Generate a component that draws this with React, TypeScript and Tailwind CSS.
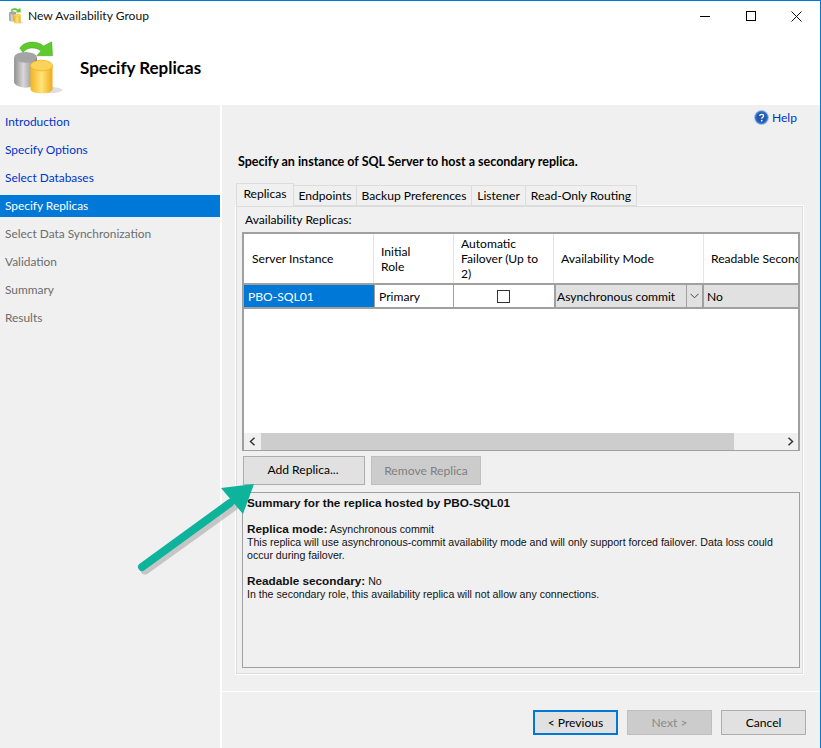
const steps = [
  { label: "Introduction", state: "link" },
  { label: "Specify Options", state: "link" },
  { label: "Select Databases", state: "link" },
  { label: "Specify Replicas", state: "active" },
  { label: "Select Data Synchronization", state: "off" },
  { label: "Validation", state: "off" },
  { label: "Summary", state: "off" },
  { label: "Results", state: "off" },
];

const tabs = [
  { label: "Endpoints", w: "w-[63px]" },
  { label: "Backup Preferences", w: "w-[115px]" },
  { label: "Listener", w: "w-[54px]" },
  { label: "Read-Only Routing", w: "w-[111px]" },
];

function DbIcon({ size }: { size: number }) {
  return (
    <svg width={size} height={size} viewBox="0 0 64 66">
      <defs>
        <linearGradient id="grayDb" x1="0" x2="1" y1="0" y2="0">
          <stop offset="0" stopColor="#8f8f8f" />
          <stop offset="0.4" stopColor="#d8d8d8" />
          <stop offset="1" stopColor="#7c7c7c" />
        </linearGradient>
        <linearGradient id="goldDb" x1="0" x2="1" y1="0" y2="0">
          <stop offset="0" stopColor="#f3b41f" />
          <stop offset="0.5" stopColor="#ffe57a" />
          <stop offset="1" stopColor="#f0a91a" />
        </linearGradient>
      </defs>
      <ellipse cx="44" cy="60" rx="19" ry="4" fill="#dedede" />
      <path d="M4 20v30c0 4 8 7 14 7s14-3 14-7V20z" fill="url(#grayDb)" />
      <ellipse cx="18" cy="20" rx="14" ry="6.500" fill="#a4a4a4" />
      <path d="M24 30v28c0 4 6 6 13.500 6s13.500-2 13.500-6V30z" fill="url(#goldDb)" />
      <ellipse cx="37.500" cy="30" rx="13.500" ry="6.500" fill="#fbd25a" stroke="#f3b41f" />
      <path d="M11 9C15 1 30-2 40 6L50 1l1 17H32l5-6C30 7 20 7 15 14z" fill="#5fc92e" stroke="#3fa51b" strokeWidth="0.6" />
    </svg>
  );
}

function HelpIcon() {
  return (
    <svg width="15" height="15" viewBox="0 0 16 16">
      <circle cx="8" cy="8" r="7.4" fill="#2f6fc4" stroke="#a9c3e6" />
      <circle cx="8" cy="8" r="5.4" fill="#2459ad" />
      <path d="M6 6.2c.2-2 4.2-2 4.2.1 0 1.500-2 1.500-2 3" fill="none" stroke="#fff" strokeWidth="1.4" />
      <rect x="7.400" y="10.600" width="1.600" height="1.600" fill="#fff" />
    </svg>
  );
}

export default function App() {
  return (
    <div className="relative w-[821px] h-[748px] overflow-hidden flex flex-col bg-[#f0f0f0] border-t border-r border-[#0078d7] text-[12.1px] text-[#000] font-['Lato','Noto_Sans',sans-serif]">
      {/* Title bar */}
      <div className="h-[30px] bg-white flex items-center pl-[8px] shrink-0">
        <DbIcon size={16} />
        <span className="ml-[4px] pt-px text-[#111]">New Availability Group</span>
        <div className="ml-auto flex items-center">
          <div className="w-[46px] flex justify-center">
            <div className="w-[10px] h-px bg-black" />
          </div>
          <div className="w-[46px] flex justify-center">
            <div className="w-[10px] h-[10px] border border-black" />
          </div>
          <div className="w-[46px] flex justify-center pr-[2px]">
            <svg width="11" height="11" viewBox="0 0 11 11">
              <path d="M0.500 0.500l10 10M10.500 0.500l-10 10" stroke="#111" strokeWidth="1" />
            </svg>
          </div>
        </div>
      </div>

      {/* Page header */}
      <div className="h-[74px] bg-white flex items-center shrink-0 pl-[10px]">
        <DbIcon size={54} />
        <h1 className="ml-[16px] text-[17px] font-bold">Specify Replicas</h1>
      </div>

      <div className="flex-1 flex min-h-0">
        {/* Steps */}
        <nav className="w-[222px] shrink-0 border-r-2 border-white pt-[6px] flex flex-col gap-[6px] text-[11.9px]">
          {steps.map((s) => (
            <div
              key={s.label}
              className={
                s.state === "active"
                  ? "h-[22px] pl-[5px] flex items-center bg-[#0078d7] text-white"
                  : s.state === "link"
                    ? "h-[22px] pl-[5px] flex items-center text-[#0033cc]"
                    : "h-[22px] pl-[5px] flex items-center text-[#6d6d6d]"
              }
            >
              {s.label}
            </div>
          ))}
        </nav>

        <div className="flex-1 min-w-0 flex flex-col">
          <div className="flex-1 pl-[13px] pr-[16px]">
            <div className="h-[25px] flex items-center justify-end gap-[3px] pr-[7px] text-[#0033cc]">
              <HelpIcon />
              <span className="pt-[2px]">Help</span>
            </div>

            <p className="mt-[22px] ml-[3px] h-[20px] text-[12.5px] font-bold leading-[20px]">
              Specify an instance of SQL Server to host a secondary replica.
            </p>

            {/* Tabs */}
            <div className="mt-[11px] h-[23px] flex items-end pl-px">
              <div className="relative z-10 w-[58px] h-[23px] pb-px bg-[#f0f0f0] border border-b-0 border-[#dcdcdc] flex items-center justify-center">
                Replicas
              </div>
              {tabs.map((t) => (
                <div
                  key={t.label}
                  className={`${t.w} h-[21px] pt-[2px] border border-l-0 border-[#dcdcdc] flex items-center justify-center`}
                >
                  {t.label}
                </div>
              ))}
            </div>

            {/* Tab page */}
            <div className="-mt-px w-[569px] h-[470px] border-2 border-white outline outline-[#dcdcdc] -outline-offset-2 pl-[5px] pr-[4px] pt-[6px]">
              <div className="h-[18px] pl-[3px] leading-[14px]">Availability Replicas:</div>

              <div className="mt-[1px] h-[219px] w-[558px] border-t-2 border-l-2 border-r-2 border-b border-[#a0a0a0] bg-white flex flex-col overflow-hidden">
                <div className="h-[51px] flex shrink-0 border-b-2 border-[#a0a0a0]">
                  <div className="w-[130px] shrink-0 border-r border-[#e4e4e4] pl-[8px] pt-[2px] flex items-center">Server Instance</div>
                  <div className="w-[80px] shrink-0 border-r border-[#e4e4e4] pl-[7px] flex items-center leading-[15px]">
                    <span>
                      Initial
                      <br />
                      Role
                    </span>
                  </div>
                  <div className="w-[100px] shrink-0 border-r border-[#e4e4e4] pl-[7px] flex items-center leading-[15px]">
                    <span>
                      Automatic
                      <br />
                      Failover (Up to
                      <br />
                      2)
                    </span>
                  </div>
                  <div className="w-[150px] shrink-0 border-r border-[#e4e4e4] pl-[7px] pt-[2px] flex items-center text-[12.3px]">Availability Mode</div>
                  <div className="flex-1 min-w-0 pl-[7px] pt-[2px] flex items-center whitespace-nowrap overflow-hidden">Readable Secondary</div>
                </div>

                <div className="h-[24px] flex shrink-0 border-b-2 border-[#a0a0a0]">
                  <div className="w-[130px] shrink-0 bg-[#0078d7] text-white pl-[4px] pt-[2px] flex items-center">PBO-SQL01</div>
                  <div className="w-[80px] shrink-0 border-x border-[#a0a0a0] pl-[4px] pt-[2px] flex items-center">Primary</div>
                  <div className="w-[100px] shrink-0 pr-px flex items-center justify-center">
                    <div className="w-[13px] h-[13px] border border-[#333] bg-white" />
                  </div>
                  <div className="w-[150px] shrink-0 border-x-2 border-[#a0a0a0] bg-[#e1e1e1] flex items-center pl-[1px]">
                    <span className="flex-1 pt-[2px]">Asynchronous commit</span>
                    <div className="w-[16px] self-stretch border-l border-[#a0a0a0] flex items-center justify-center">
                      <svg width="9" height="6" viewBox="0 0 9 6">
                        <path d="M0.500 0.800l4 4 4-4" fill="none" stroke="#444" />
                      </svg>
                    </div>
                  </div>
                  <div className="flex-1 min-w-0 bg-[#e1e1e1] pl-[3px] pt-[2px] flex items-center">No</div>
                </div>

                <div className="flex-1" />

                <div className="h-[17px] flex items-center shrink-0 bg-[#f0f0f0]">
                  <div className="w-[17px] flex justify-center">
                    <svg width="7" height="9" viewBox="0 0 7 9">
                      <path d="M5.500 0.800l-4 3.700 4 3.700" fill="none" stroke="#333" strokeWidth="1.500" />
                    </svg>
                  </div>
                  <div className="w-[473px] self-stretch bg-[#cdcdcd]" />
                  <div className="flex-1 flex justify-end pr-[4px]">
                    <svg width="7" height="9" viewBox="0 0 7 9">
                      <path d="M1.500 0.800l4 3.700-4 3.700" fill="none" stroke="#333" strokeWidth="1.500" />
                    </svg>
                  </div>
                </div>
              </div>

              <div className="mt-[5px] pl-px flex gap-[6px]">
                <div className="w-[122px] h-[29px] pr-[2px] bg-[#e1e1e1] border border-[#adadad] flex items-center justify-center">Add Replica...</div>
                <div className="w-[110px] h-[29px] pt-px bg-[#cccccc] border border-[#bfbfbf] text-[#7f7f7f] flex items-center justify-center">Remove Replica</div>
              </div>

              {/* Summary */}
              <div className="mt-[7px] w-[558px] h-[176px] border border-[#a0a0a0] px-[4px] py-[2px] font-['Liberation_Sans',sans-serif] text-[10.6px] leading-[13px] text-[#111]">
                <p className="font-bold text-[11.75px] leading-[16px]">Summary for the replica hosted by PBO-SQL01</p>
                <p className="mt-[11px]">
                  <b className="text-[11.75px]">Replica mode:</b> Asynchronous commit
                </p>
                <p>This replica will use asynchronous-commit availability mode and will only support forced failover. Data loss could occur during failover.</p>
                <p className="mt-[12px]">
                  <b className="text-[11.75px]">Readable secondary:</b> No
                </p>
                <p>In the secondary role, this availability replica will not allow any connections.</p>
              </div>
            </div>
          </div>

          {/* Wizard buttons */}
          <div className="h-[56px] mb-[1px] shrink-0 border-t border-white flex items-start justify-end gap-[9px] pt-[18px] pr-[14px]">
            <div className="w-[85px] h-[25px] pt-[2px] bg-[#e1e1e1] border-2 border-[#0078d7] flex items-center justify-center">&lt; Previous</div>
            <div className="w-[85px] h-[25px] pt-[2px] bg-[#cccccc] border border-[#bfbfbf] text-[#8a8a8a] flex items-center justify-center">Next &gt;</div>
            <div className="w-[85px] h-[25px] pt-[2px] bg-[#e1e1e1] border border-[#adadad] flex items-center justify-center">Cancel</div>
          </div>
        </div>
      </div>

      {/* Annotation arrow */}
      <svg className="absolute left-[130px] top-[470px] pointer-events-none" width="135" height="115" viewBox="0 0 135 115">
        <path d="M14 97L103 33" stroke="#9a9a9a" strokeOpacity="0.5" strokeWidth="9" strokeLinecap="round" transform="translate(1 2)" />
        <path d="M12 96L100 32" stroke="#0db39a" strokeWidth="8" strokeLinecap="round" />
        <path d="M91 17L124 13L113 43Z" fill="#0db39a" />
      </svg>
    </div>
  );
}
